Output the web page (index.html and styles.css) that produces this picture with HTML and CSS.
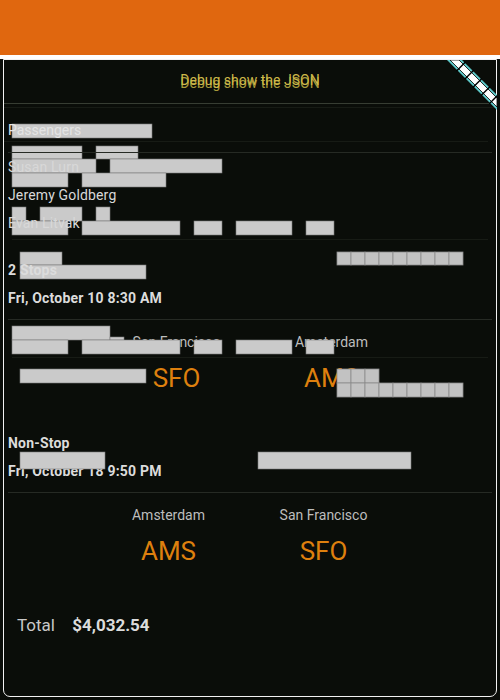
FILE: index.html
```html
<!DOCTYPE html>
<html lang="en">
<head>
<meta charset="utf-8">
<title>Trip</title>
<link rel="stylesheet" href="styles.css">
</head>
<body>
<div class="appbar"></div>
<div class="strip"></div>
<main class="card">
  <div class="debug">Debug show the JSON</div>
  <div class="rule rule-light"></div>
  <div class="rule rule-dark gap3"></div>
  <section class="passengers">
    <div class="label">Passengers</div>
  </section>
  <div class="rule rule-dark inset-r"></div>
  <div class="rule rule-mid gap10 inset-x"></div>
  <section class="names">
    <div class="name">Susan Lurn</div>
    <div class="name">Jeremy Goldberg</div>
    <div class="name">Evan Litvak</div>
  </section>
  <div class="rule rule-dark inset-wide"></div>
  <section class="flight">
    <div class="stops">2 Stops</div>
    <div class="date">Fri, October 10 8:30 AM</div>
  </section>
  <div class="rule rule-mid inset-x"></div>
  <div class="route route-out cities">
    <div class="col">San Francisco</div>
    <div class="col">Amsterdam</div>
  </div>
  <div class="rule rule-dark inset-wide"></div>
  <div class="route route-out codes">
    <div class="col">SFO</div>
    <div class="col">AMS</div>
  </div>
  <section class="flight flight-back">
    <div class="stops">Non-Stop</div>
    <div class="date">Fri, October 18 9:50 PM</div>
  </section>
  <div class="rule rule-mid inset-x"></div>
  <div class="route route-back cities">
    <div class="col">Amsterdam</div>
    <div class="col">San Francisco</div>
  </div>
  <div class="route route-back codes codes-back">
    <div class="col">AMS</div>
    <div class="col">SFO</div>
  </div>
  <div class="total">
    <span class="total-label">Total</span>
    <span class="total-amount">$4,032.54</span>
  </div>
</main>

<svg class="overlay under" width="500" height="700" viewBox="0 0 500 700" aria-hidden="true">
  <g class="blocks">
    <rect x="12" y="124" width="140" height="14"/>
    <rect x="12" y="146" width="70" height="13"/>
    <rect x="96" y="146" width="42" height="13"/>
    <rect x="12" y="159" width="84" height="14"/>
    <rect x="110" y="159" width="112" height="14"/>
    <rect x="12" y="173" width="56" height="14"/>
    <rect x="82" y="173" width="84" height="14"/>
    <rect x="12" y="207" width="14" height="14"/>
    <rect x="40" y="207" width="42" height="14"/>
    <rect x="96" y="207" width="14" height="14"/>
    <rect x="12" y="221" width="56" height="14"/>
    <rect x="82" y="221" width="98" height="14"/>
    <rect x="194" y="221" width="28" height="14"/>
    <rect x="236" y="221" width="56" height="14"/>
    <rect x="306" y="221" width="28" height="14"/>
    <rect x="20" y="252" width="42" height="13"/>
    <rect x="20" y="265" width="126" height="14"/>
  </g>
  <g class="cells">
    <rect x="337" y="252" width="14" height="13"/>
    <rect x="351" y="252" width="14" height="13"/>
    <rect x="365" y="252" width="14" height="13"/>
    <rect x="379" y="252" width="14" height="13"/>
    <rect x="393" y="252" width="14" height="13"/>
    <rect x="407" y="252" width="14" height="13"/>
    <rect x="421" y="252" width="14" height="13"/>
    <rect x="435" y="252" width="14" height="13"/>
    <rect x="449" y="252" width="14" height="13"/>
  </g>
</svg>

<svg class="overlay over" width="500" height="700" viewBox="0 0 500 700" aria-hidden="true">
  <g class="blocks">
    <rect x="12" y="326" width="98" height="14"/>
    <rect x="110" y="337" width="14" height="3"/>
    <rect x="12" y="340" width="56" height="14"/>
    <rect x="82" y="340" width="98" height="14"/>
    <rect x="194" y="340" width="28" height="14"/>
    <rect x="236" y="340" width="56" height="14"/>
    <rect x="306" y="340" width="28" height="14"/>
    <rect x="20" y="369" width="126" height="14"/>
    <rect x="20" y="452" width="85" height="17"/>
    <rect x="258" y="452" width="153" height="17"/>
  </g>
  <g class="cells">
    <rect x="337" y="369" width="14" height="14"/>
    <rect x="351" y="369" width="14" height="14"/>
    <rect x="365" y="369" width="14" height="14"/>
    <rect x="337" y="383" width="14" height="14"/>
    <rect x="351" y="383" width="14" height="14"/>
    <rect x="365" y="383" width="14" height="14"/>
    <rect x="379" y="383" width="14" height="14"/>
    <rect x="393" y="383" width="14" height="14"/>
    <rect x="407" y="383" width="14" height="14"/>
    <rect x="421" y="383" width="14" height="14"/>
    <rect x="435" y="383" width="14" height="14"/>
    <rect x="449" y="383" width="14" height="14"/>
  </g>
</svg>

<svg class="banner" width="50" height="50" viewBox="0 0 50 50" aria-hidden="true">
  <polygon points="0,0 15,0 50,35 50,50" fill="#5ec8c8"/>
  <polygon points="3,0 12,0 50,38 50,47" fill="#ffffff" stroke="#000" stroke-width="0.8"/>
  <g stroke="#000" stroke-width="1.4">
    <line x1="9.5" y1="11" x2="18.5" y2="2"/>
    <line x1="17.7" y1="19.2" x2="26.7" y2="10.2"/>
    <line x1="25.9" y1="27.4" x2="34.9" y2="18.4"/>
    <line x1="34.1" y1="35.6" x2="43.1" y2="26.6"/>
    <line x1="42.3" y1="43.8" x2="51.3" y2="34.8"/>
  </g>
</svg>
</body>
</html>
```

FILE: styles.css
```css
* { box-sizing: border-box; }

html, body {
  margin: 0;
  padding: 0;
}

body {
  position: relative;
  width: 500px;
  height: 700px;
  overflow: hidden;
  background: #0a0d09;
  font-family: Roboto, "Noto Sans", "DejaVu Sans", sans-serif;
  color: #d8d8d8;
}

.appbar {
  height: 55px;
  background: #e0670f;
}

.strip {
  height: 4px;
  background: #ffffff;
}

.card {
  margin: 0 3px;
  height: 638px;
  border: 1px solid #f2f2f2;
  border-radius: 0 0 7px 7px;
}

.card > * {
  position: relative;
  z-index: 2;
}

.debug {
  height: 43px;
  line-height: 40px;
  text-align: center;
  font-size: 14px;
  color: #cdb94a;
  text-shadow: 0 3px 0 #a89a3a;
}

.rule { height: 1px; }
.rule-light { background: #373d33; }
.rule-dark { background: #171b15; }
.rule-mid { background: #262a24; }
.gap3 { margin-top: 3px; }
.gap10 { margin-top: 10px; }
.inset-r { margin-right: 8px; }
.inset-x { margin-left: 4px; margin-right: 4px; }
.inset-wide { margin-left: 8px; margin-right: 8px; }

.passengers {
  padding: 14px 4px 3px;
  font-size: 14px;
  line-height: 16px;
  color: #e4e4e4;
}

.names {
  padding: 0 4px 2px;
  font-size: 14px;
  line-height: 28px;
  letter-spacing: 0.15px;
  color: #d8d8d8;
}

.flight {
  padding: 22px 4px 13px;
  font-size: 14px;
  line-height: 16px;
  font-weight: 700;
  letter-spacing: 0.2px;
  color: #dcdcdc;
}

.flight .date {
  margin-top: 12px;
}

.flight-back {
  padding-top: 43px;
}

.route {
  display: flex;
}

.route .col {
  width: 155px;
  text-align: center;
}

.route-out { padding-left: 95px; }
.route-back { padding-left: 87px; }

.cities {
  padding-top: 14px;
  padding-bottom: 7px;
  font-size: 14px;
  line-height: 16px;
  color: #bdbdbd;
}

.codes {
  padding-top: 6px;
  font-size: 26px;
  line-height: 28px;
  color: #de800e;
}

.codes-back {
  padding-top: 7px;
}

.total {
  margin-top: 50px;
  padding-left: 13px;
  font-size: 17px;
  line-height: 20px;
}

.total-label {
  color: #c8c8c8;
}

.total-amount {
  margin-left: 13px;
  font-weight: 700;
  color: #dcdcdc;
}

.overlay {
  position: absolute;
  left: 0;
  top: 0;
  pointer-events: none;
}

.overlay.under { z-index: 1; }
.overlay.over { z-index: 3; }

.overlay .blocks rect {
  fill: #cacaca;
  stroke: #7a7a7a;
  stroke-width: 0.6;
}

.overlay .cells rect {
  fill: #c2c2c2;
  stroke: #8c8c8c;
  stroke-width: 0.8;
}

.banner {
  position: absolute;
  left: 447px;
  top: 60px;
  z-index: 4;
}
```
